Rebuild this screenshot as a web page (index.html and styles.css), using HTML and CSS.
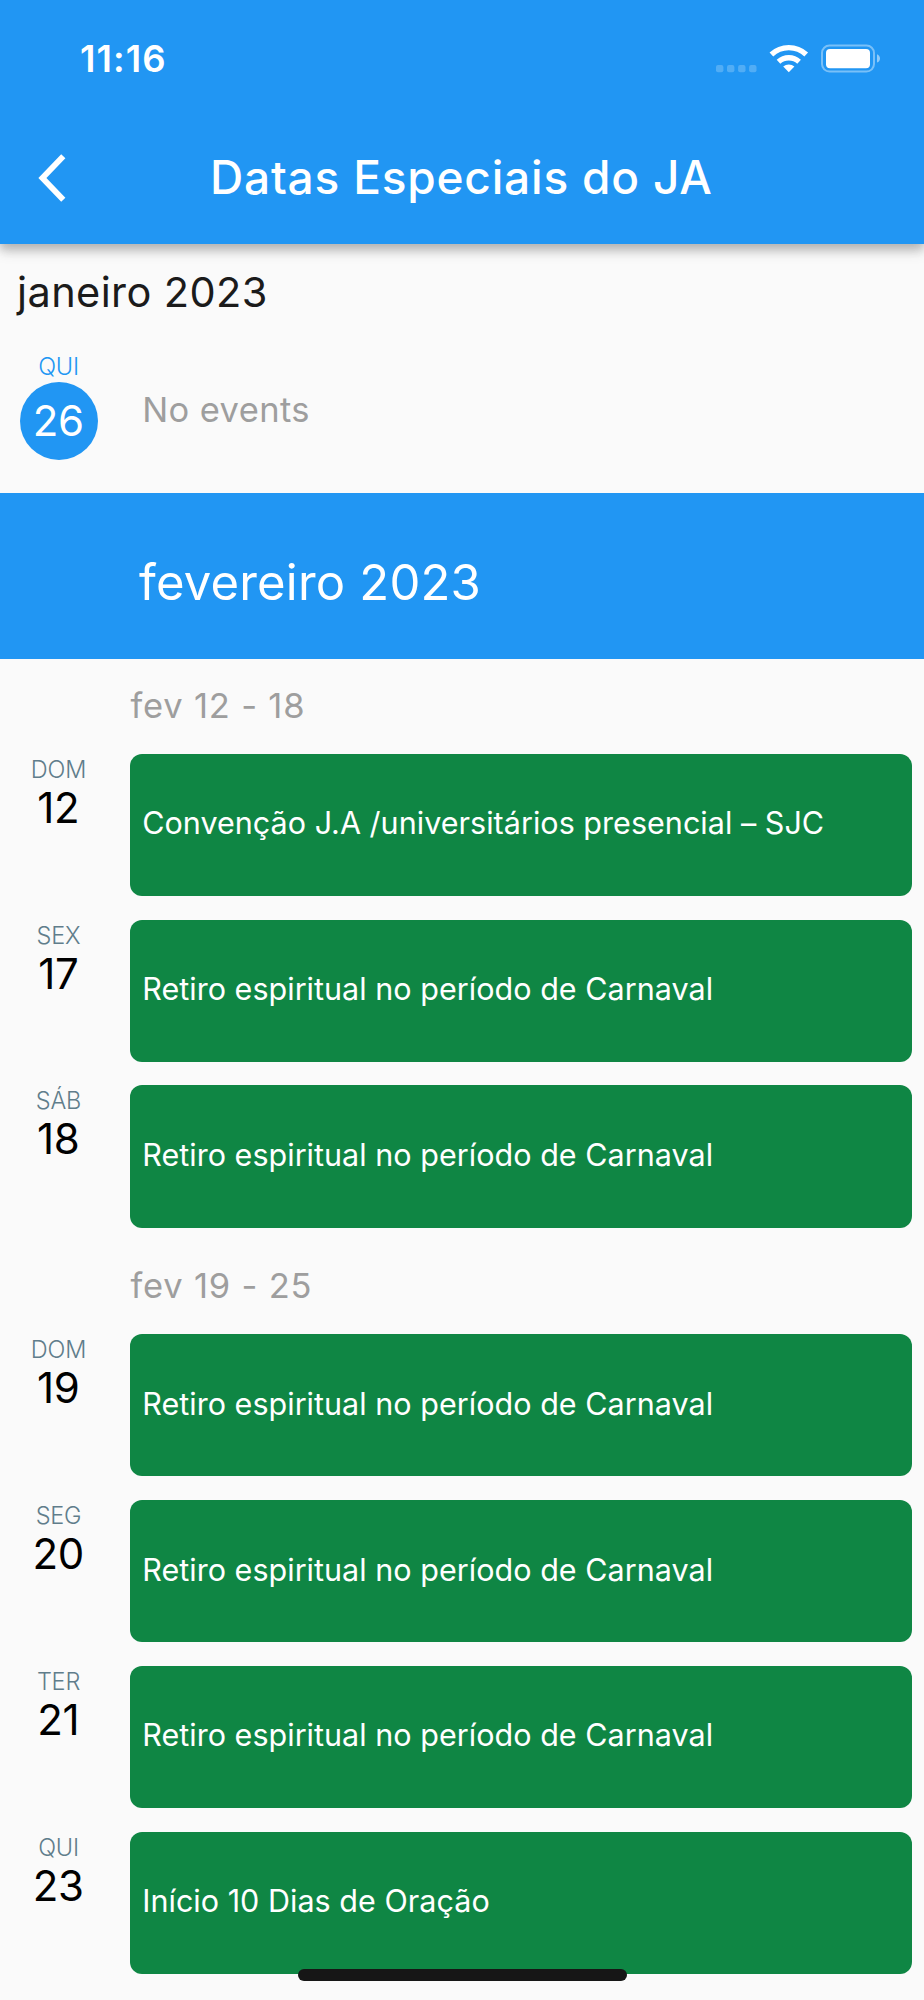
FILE: index.html
```html
<!DOCTYPE HTML>
<html lang="pt-BR">
  <head>
    <meta charset="utf-8">
    <title>Datas Especiais do JA</title>
    <link rel="stylesheet" href="styles.css">
  </head>
  <body>
    <header class="appBar">
      <div class="statusBar">
        <span class="clock">11:16</span>
        <svg class="statusIcons" width="168" height="32" viewBox="0 0 168 32">
          <g fill="#fff" fill-opacity="0.22">
            <rect x="2" y="22" width="7.4" height="7.2" rx="2"/>
            <rect x="13" y="22" width="7.4" height="7.2" rx="2"/>
            <rect x="24.1" y="22" width="7.4" height="7.2" rx="2"/>
            <rect x="35.1" y="22" width="7.4" height="7.2" rx="2"/>
          </g>
          <g fill="none" stroke="#fff" stroke-width="5.4">
            <path d="M57.4 11.4a25.6 25.6 0 0 1 34.8 0"/>
            <path d="M64.5 18.7a15.3 15.3 0 0 1 20.6 0"/>
          </g>
          <path fill="#fff" d="M74.8 29.2l-5.6-5.6a8.3 8.3 0 0 1 11.2 0z"/>
          <rect x="108" y="2.6" width="52" height="26" rx="7.5" fill="none" stroke="#fff" stroke-opacity="0.4" stroke-width="2"/>
          <rect x="112" y="6" width="44" height="19.2" rx="4" fill="#fff"/>
          <path fill="#fff" fill-opacity="0.5" d="M163 11.2c4 1.4 4 7 0 8.4z"/>
        </svg>
      </div>
      <div class="titleBar">
        <svg class="back" width="30" height="50" viewBox="0 0 30 50">
          <path d="M25.3 3.2L4.4 25l20.9 21.8" fill="none" stroke="#fff" stroke-width="5.8"/>
        </svg>
        <h1 class="title">Datas Especiais do JA</h1>
      </div>
    </header>

    <main class="schedule">
      <h2 class="currentMonth">janeiro 2023</h2>
      <div class="row today">
        <div class="day"><span class="weekday">QUI</span><span class="number">26</span></div>
        <div class="empty">No events</div>
      </div>

      <h2 class="month">fevereiro 2023</h2>

      <h3 class="week">fev 12 - 18</h3>
      <div class="row">
        <div class="day"><span class="weekday">DOM</span><span class="number">12</span></div>
        <div class="event">Convenção J.A /universitários presencial – SJC</div>
      </div>
      <div class="row">
        <div class="day"><span class="weekday">SEX</span><span class="number">17</span></div>
        <div class="event">Retiro espiritual no período de Carnaval</div>
      </div>
      <div class="row">
        <div class="day"><span class="weekday">SÁB</span><span class="number">18</span></div>
        <div class="event">Retiro espiritual no período de Carnaval</div>
      </div>

      <h3 class="week">fev 19 - 25</h3>
      <div class="row">
        <div class="day"><span class="weekday">DOM</span><span class="number">19</span></div>
        <div class="event">Retiro espiritual no período de Carnaval</div>
      </div>
      <div class="row">
        <div class="day"><span class="weekday">SEG</span><span class="number">20</span></div>
        <div class="event">Retiro espiritual no período de Carnaval</div>
      </div>
      <div class="row">
        <div class="day"><span class="weekday">TER</span><span class="number">21</span></div>
        <div class="event">Retiro espiritual no período de Carnaval</div>
      </div>
      <div class="row">
        <div class="day"><span class="weekday">QUI</span><span class="number">23</span></div>
        <div class="event">Início 10 Dias de Oração</div>
      </div>
    </main>

    <div class="homeIndicator"></div>
  </body>
</html>
```

FILE: styles.css
```css
* {
  box-sizing: border-box;
}

body {
  margin: 0;
  width: 924px;
  height: 2000px;
  overflow: hidden;
  background-color: #fafafa;
  font-family: Inter, "Liberation Sans", sans-serif;
}

h1, h2, h3 {
  margin: 0;
  font-weight: 400;
  white-space: nowrap;
}

.appBar {
  height: 244px;
  background-color: #2196f3;
  color: #fff;
  box-shadow: 0 5px 9px rgba(0, 0, 0, 0.17), 0 9px 12px rgba(0, 0, 0, 0.1), 0 2px 14px rgba(0, 0, 0, 0.08);
}

.statusBar {
  height: 111px;
  padding: 38px 42px 0 80px;
  display: flex;
  justify-content: space-between;
}

.clock {
  font-size: 36.5px;
  font-weight: 600;
  line-height: 42px;
  letter-spacing: 1.1px;
}

.statusIcons {
  margin-top: 5px;
}

.titleBar {
  height: 133px;
  padding: 0 0 1px 38px;
  display: flex;
  align-items: center;
}

.back {
  margin-top: 1px;
}

.title {
  margin-left: 142px;
  font-size: 46px;
  font-weight: 500;
  letter-spacing: 0.8px;
}

.currentMonth {
  height: 90px;
  padding: 24px 0 0 17px;
  color: #1b1b1b;
  font-size: 41.5px;
  line-height: 48px;
  letter-spacing: 0.4px;
}

.row {
  height: 165.85px;
  padding: 11.85px 12px 11.85px 0;
  display: flex;
}

.day {
  width: 118px;
  margin-right: 12.2px;
  display: flex;
  flex-direction: column;
  align-items: center;
}

.weekday {
  margin-top: 2px;
  padding-right: 1px;
  color: #607d8b;
  font-size: 23.5px;
  font-weight: 300;
  line-height: 28px;
  letter-spacing: -0.2px;
}

.number {
  padding-right: 1.5px;
  color: #000;
  font-size: 42px;
  line-height: 48px;
  letter-spacing: -0.4px;
}

.today {
  height: 159px;
  padding-top: 17px;
}

.today .weekday {
  color: #2196f3;
}

.today .number {
  width: 78.5px;
  height: 78.5px;
  margin-top: 0.5px;
  border-radius: 50%;
  background-color: #2196f3;
  color: #fff;
  line-height: 78.5px;
  text-align: center;
}

.empty {
  padding: 38px 0 0 12px;
  color: #9e9e9e;
  font-size: 34.5px;
  line-height: 42px;
  letter-spacing: 0.4px;
}

.month {
  height: 166px;
  padding: 60px 0 0 139px;
  background-color: #2196f3;
  color: #fff;
  font-size: 49px;
  line-height: 60px;
  letter-spacing: 0.2px;
}

.week {
  height: 82.9px;
  padding: 26px 0 0 130.5px;
  color: #9e9e9e;
  font-size: 34.5px;
  line-height: 42px;
  letter-spacing: 0.8px;
}

.event {
  flex: 1;
  padding: 0 0 4px 12px;
  display: flex;
  align-items: center;
  border-radius: 12px;
  background-color: #0f8644;
  color: #fff;
  font-size: 30.5px;
  letter-spacing: 0.03px;
  white-space: nowrap;
}

.homeIndicator {
  position: absolute;
  left: 298px;
  top: 1969px;
  width: 329px;
  height: 12px;
  border-radius: 6px;
  background-color: #161616;
}
```
